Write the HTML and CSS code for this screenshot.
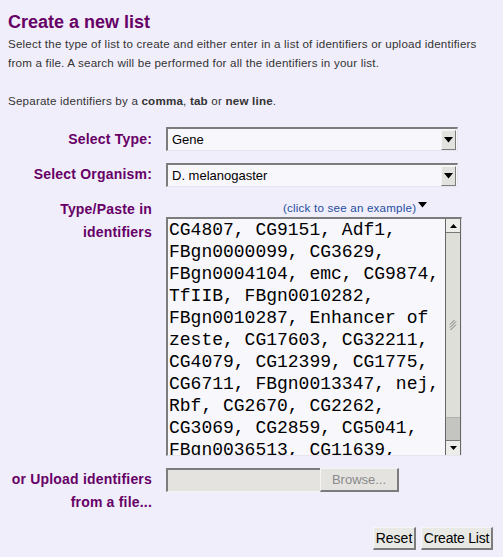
FILE: index.html
```html
<!DOCTYPE html>
<html>
<head>
<meta charset="utf-8">
<title>Create a new list</title>
<link rel="stylesheet" href="styles.css">
</head>
<body>
<div class="page">
  <h1 class="title">Create a new list</h1>
  <p class="intro">Select the type of list to create and either enter in a list of identifiers or upload identifiers from a file. A search will be performed for all the identifiers in your list.<br><br>Separate identifiers by a <b>comma</b>, <b>tab</b> or <b>new line</b>.</p>

  <form class="form">
    <label class="label label-mid">Select Type:</label>
    <div class="select">
      <select class="select-native"><option>Gene</option></select>
      <span class="select-arrow"><svg width="9" height="6" viewBox="0 0 9 6"><path d="M0 0h9L4.5 5.5z" fill="#000"/></svg></span>
    </div>

    <label class="label label-mid">Select Organism:</label>
    <div class="select">
      <select class="select-native"><option>D. melanogaster</option></select>
      <span class="select-arrow"><svg width="9" height="6" viewBox="0 0 9 6"><path d="M0 0h9L4.5 5.5z" fill="#000"/></svg></span>
    </div>

    <label class="label label-top">Type/Paste in<br>identifiers</label>
    <div class="paste">
      <div class="example"><a class="example-link" href="#">(click to see an example)</a><svg class="example-tri" width="9" height="6" viewBox="0 0 9 6"><path d="M0 0h9L4.5 5.5z" fill="#000"/></svg></div>
      <div class="textarea">
        <textarea class="textarea-native" spellcheck="false">CG4807, CG9151, Adf1, FBgn0000099, CG3629, FBgn0004104, emc, CG9874, TfIIB, FBgn0010282, FBgn0010287, Enhancer of zeste, CG17603, CG32211, CG4079, CG12399, CG1775, CG6711, FBgn0013347, nej, Rbf, CG2670, CG2262, CG3069, CG2859, CG5041, FBgn0036513, CG11639, CG5502, CG17697</textarea>
        <div class="scrollbar">
          <span class="sb-btn"><svg width="7" height="4" viewBox="0 0 7 4"><path d="M3.5 0L7 4H0z" fill="#000"/></svg></span>
          <span class="sb-thumb"><svg width="8" height="10" viewBox="0 0 8 10"><path d="M0.5 4.5l6-6M0.5 7.5l6-6M0.5 10.5l6-6" stroke="#777" stroke-width="1" transform="translate(0.5 0)"/></svg></span>
          <span class="sb-track"></span>
          <span class="sb-btn"><svg width="7" height="4" viewBox="0 0 7 4"><path d="M0 0h7L3.5 4z" fill="#000"/></svg></span>
        </div>
      </div>
    </div>

    <label class="label label-top">or Upload identifiers<br>from a file...</label>
    <div class="file">
      <span class="file-box"></span>
      <button type="button" class="file-btn" disabled>Browse...</button>
    </div>

    <div class="actions">
      <button type="reset" class="btn btn-reset">Reset</button>
      <button type="button" class="btn btn-create">Create List</button>
    </div>
  </form>
</div>
</body>
</html>
```

FILE: styles.css
```css
html, body {
  margin: 0;
  padding: 0;
  background: #f1eefb;
}
body {
  font-family: "Liberation Sans", Arial, sans-serif;
  color: #333;
}
.page {
  padding: 8px 10px 0 8px;
}
.title {
  margin: 2px 0 0;
  font-size: 18px;
  line-height: 24px;
  font-weight: bold;
  color: #660066;
}
.intro {
  margin: 0;
  font-size: 11.6px;
  line-height: 19px;
  color: #333;
  letter-spacing: 0.2px;
}
.intro b {
  color: #333;
}
.form {
  display: grid;
  grid-template-columns: 144px 1fr;
  column-gap: 14px;
  row-gap: 12px;
  margin-top: 17px;
}
.label {
  font-size: 14px;
  font-weight: bold;
  color: #660066;
  text-align: right;
  line-height: 23px;
  letter-spacing: 0.2px;
}
.label-mid {
  align-self: center;
}
.label-top {
  align-self: start;
}
.select {
  display: flex;
  width: 292px;
  height: 24px;
  box-sizing: border-box;
  border-top: 2px solid #7c7c7c;
  border-left: 2px solid #7c7c7c;
  border-right: 1px solid #e6e4ee;
  border-bottom: 1px solid #e6e4ee;
  background: #f8f7fc;
  align-items: stretch;
}
.select + .label {
  margin-top: -1px;
}
.select-native {
  flex: 1;
  appearance: none;
  -webkit-appearance: none;
  border: 0;
  background: transparent;
  font-family: "Liberation Sans", Arial, sans-serif;
  font-size: 13px;
  color: #000;
  padding: 0 0 0 4px;
  margin: 0;
  outline: none;
}
.select-arrow {
  width: 15px;
  margin: 1px 1px 0 0;
  box-sizing: border-box;
  background: #e2e2de;
  border-top: 1px solid #f4f4f4;
  border-left: 1px solid #f4f4f4;
  border-right: 1px solid #7c7c7c;
  border-bottom: 1px solid #7c7c7c;
  display: flex;
  align-items: center;
  justify-content: center;
}
.paste {
  display: flex;
  flex-direction: column;
  margin-top: -2px;
}
.example {
  height: 20px;
  display: flex;
  align-items: center;
  padding-left: 117px;
}
.example-link {
  font-size: 11.6px;
  color: #1f4f9f;
  text-decoration: none;
  letter-spacing: 0.2px;
}
.example-tri {
  margin-left: 2px;
  margin-top: -4px;
}
.textarea {
  display: flex;
  width: 296px;
  height: 239px;
  box-sizing: border-box;
  border-top: 2px solid #7c7c7c;
  border-left: 2px solid #7c7c7c;
  border-right: 1px solid #e6e4ee;
  border-bottom: 1px solid #e6e4ee;
  background: #f8f7fc;
}
.textarea-native {
  flex: 1;
  resize: none;
  border: 0;
  outline: none;
  overflow: hidden;
  background: transparent;
  font-family: "Liberation Mono", "Courier New", monospace;
  font-size: 18px;
  line-height: 22px;
  color: #000;
  padding: 0 0 0 1px;
  margin: 0;
}
.scrollbar {
  width: 16px;
  box-sizing: border-box;
  border-left: 1px solid #666;
  border-right: 1px solid #666;
  display: flex;
  flex-direction: column;
  background: #c6c6c2;
}
.sb-btn {
  height: 14px;
  flex: none;
  box-sizing: border-box;
  background: #ecece8;
  border-bottom: 1px solid #777;
  display: flex;
  align-items: center;
  justify-content: center;
}
.sb-btn:last-child {
  border-bottom: 0;
  border-top: 1px solid #777;
  height: 15px;
}
.sb-thumb {
  height: 184px;
  flex: none;
  background: #dfdfda;
  border-bottom: 1px solid #b0b0ac;
  display: flex;
  align-items: center;
  justify-content: center;
}
.sb-track {
  flex: 1;
  background: #c4c4c0;
}
.file {
  display: flex;
  height: 24px;
}
.file-box {
  width: 154px;
  box-sizing: border-box;
  border-top: 2px solid #7c7c7c;
  border-left: 2px solid #7c7c7c;
  border-bottom: 1px solid #f4f4f4;
  background: #e4e3e0;
}
.file-btn {
  width: 79px;
  height: 24px;
  margin: 0;
  padding: 0;
  box-sizing: border-box;
  border-top: 1px solid #f4f4f4;
  border-left: 1px solid #f4f4f4;
  border-right: 2px solid #7c7c7c;
  border-bottom: 2px solid #7c7c7c;
  background: #e4e3e0;
  font-family: "Liberation Sans", Arial, sans-serif;
  font-size: 13px;
  color: #8a8a8a;
}
.actions {
  grid-column: 1 / -1;
  display: flex;
  justify-content: flex-end;
  gap: 5px;
  margin-top: 1px;
}
.btn {
  height: 23px;
  margin: 0;
  padding: 0;
  box-sizing: border-box;
  border-top: 1px solid #f6f6f6;
  border-left: 1px solid #f6f6f6;
  border-right: 2px solid #7c7c7c;
  border-bottom: 2px solid #7c7c7c;
  background: #e8e8e4;
  font-family: "Liberation Sans", Arial, sans-serif;
  font-size: 14px;
  color: #000;
}
.btn-reset {
  width: 43px;
}
.btn-create {
  width: 72px;
  letter-spacing: -0.2px;
}
```
